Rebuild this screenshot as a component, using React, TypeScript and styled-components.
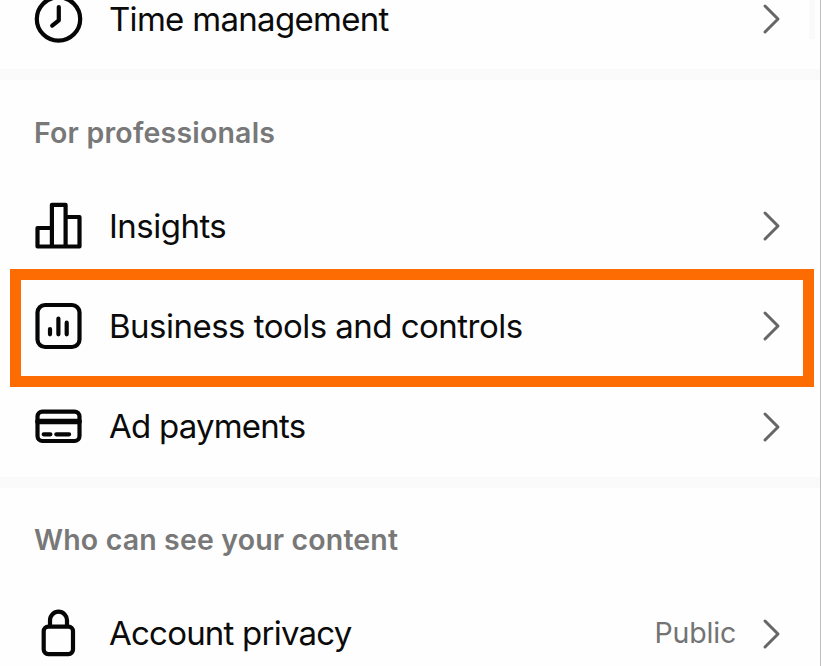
import React from "react";
import styled, { createGlobalStyle } from "styled-components";

const GlobalStyle = createGlobalStyle`
  *, *::before, *::after { box-sizing: border-box; }
  body { margin: 0; background: #fefefe; overflow: hidden; }
`;

const Screen = styled.main`
  position: relative;
  width: 821px;
  height: 666px;
  overflow: hidden;
  background: #fefefe;
  border-right: 1px solid #bdbdbd;
  font-family: Inter, "Liberation Sans", sans-serif;
  font-optical-sizing: none;
`;

const Section = styled.section<{ $pull?: number }>`
  display: flex;
  flex-direction: column;
  margin-top: ${(p) => p.$pull ?? 0}px;
`;

const Divider = styled.div`
  height: 11px;
  background: #fafafa;
`;

const Heading = styled.h2<{ $tracking: number; $top?: number }>`
  height: 96px;
  margin: 0;
  padding: ${(p) => p.$top ?? 35}px 0 0 34px;
  color: #787878;
  font-size: 28.5px;
  font-weight: 600;
  line-height: 36px;
  letter-spacing: ${(p) => p.$tracking}px;
  white-space: nowrap;
`;

const Row = styled.div<{ $after?: number }>`
  display: flex;
  align-items: center;
  height: 100px;
  flex-shrink: 0;
  margin-bottom: ${(p) => p.$after ?? 0}px;
  padding: 0 38px 0 34px;
`;

const Glyph = styled.svg`
  width: 50px;
  height: 50px;
  flex-shrink: 0;
  fill: none;
  stroke: #060606;
  stroke-width: 4.2;
  stroke-linejoin: round;
  stroke-linecap: round;
`;

const Label = styled.span<{ $tracking: number; $lift: number }>`
  flex: 1;
  margin-left: 25px;
  margin-bottom: ${(p) => p.$lift * 2}px;
  color: #0b0b0b;
  font-size: 33px;
  line-height: 40px;
  letter-spacing: ${(p) => p.$tracking}px;
  white-space: nowrap;
`;

const Value = styled.span`
  margin-right: 26px;
  margin-bottom: 2px;
  color: #737373;
  font-size: 28.5px;
  line-height: 36px;
  letter-spacing: -0.2px;
`;

const ChevronSvg = styled.svg`
  width: 20px;
  height: 32px;
  flex-shrink: 0;
  fill: none;
  stroke: #666;
  stroke-width: 3;
  stroke-linecap: round;
  stroke-linejoin: round;
`;

const Highlight = styled.div`
  position: absolute;
  top: 269px;
  left: 10px;
  width: 804px;
  height: 118px;
  border: 11px solid #fd6c03;
`;

const ScrollHint = styled.div`
  position: absolute;
  top: 0;
  left: 809px;
  width: 6px;
  height: 39px;
  background: #fafafa;
`;

const Chevron = () => (
  <ChevronSvg viewBox="0 0 20 32">
    <path d="M3 3l13 13L3 29" />
  </ChevronSvg>
);

const ClockIcon = () => (
  <Glyph viewBox="0 0 50 50">
    <circle cx="24.5" cy="25" r="21.7" />
    <path d="M24.8 13v13.3L18.2 31.6" />
  </Glyph>
);

const InsightsIcon = () => (
  <Glyph viewBox="0 0 50 50">
    <path d="M17.9 27H3.5v18.5h42V16H31.6M17.9 45.5V3.8h13.7v41.7" />
  </Glyph>
);

const BusinessIcon = () => (
  <Glyph viewBox="0 0 50 50">
    <rect x="3.5" y="4" width="42" height="42" rx="7.5" />
    <path d="M16 28v5.3M24.4 17.7v15.6M32.7 21.7v11.6" />
  </Glyph>
);

const CardIcon = () => (
  <Glyph viewBox="0 0 50 50">
    <rect x="3.5" y="9.6" width="42" height="29.4" rx="5" />
    <path d="M4 19.5h41" strokeWidth="5.6" />
    <path d="M9.7 32.3h6.7M22.3 32.3h12.8" />
  </Glyph>
);

const LockIcon = () => (
  <Glyph viewBox="0 0 50 50">
    <rect x="9.7" y="17.6" width="29.3" height="27.5" rx="4.5" />
    <path d="M16 17V11.2a8.5 8.5 0 0 1 17 0V17" strokeLinecap="butt" />
  </Glyph>
);

interface ItemProps {
  icon: React.ReactNode;
  label: string;
  tracking?: number;
  lift?: number;
  value?: string;
  after?: number;
}

const Item = ({ icon, label, tracking = 0, lift = 0, value, after }: ItemProps) => (
  <Row $after={after}>
    {icon}
    <Label $tracking={tracking} $lift={lift}>{label}</Label>
    {value && <Value>{value}</Value>}
    <Chevron />
  </Row>
);

export default function App() {
  return (
    <>
      <GlobalStyle />
      <Screen>
        <Section $pull={-31}>
          <Item icon={<ClockIcon />} label="Time management" tracking={-0.7} />
        </Section>
        <Divider />
        <Section>
          <Heading $tracking={0.2}>For professionals</Heading>
          <Item icon={<InsightsIcon />} label="Insights" tracking={-0.52} />
          <Item icon={<BusinessIcon />} label="Business tools and controls" tracking={-0.52} after={1} />
          <Item icon={<CardIcon />} label="Ad payments" tracking={-0.78} lift={1} />
        </Section>
        <Divider />
        <Section>
          <Heading $tracking={0.15} $top={34}>Who can see your content</Heading>
          <Item icon={<LockIcon />} label="Account privacy" tracking={-0.78} lift={1} value="Public" />
        </Section>
        <ScrollHint />
        <Highlight />
      </Screen>
    </>
  );
}
